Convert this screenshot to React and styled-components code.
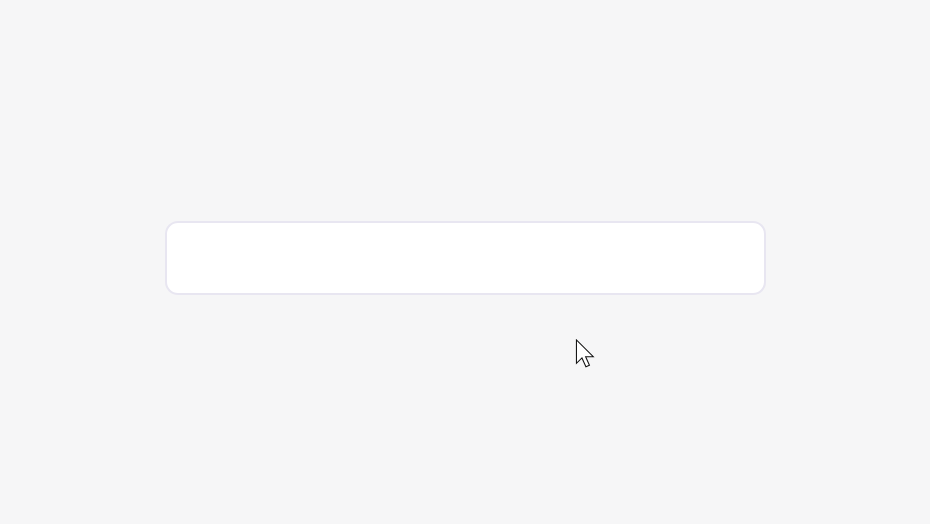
import React from 'react';
import styled, { createGlobalStyle } from 'styled-components';

const GlobalStyle = createGlobalStyle`
  html, body {
    margin: 0;
    padding: 0;
    background: #f6f6f7;
    font-family: Inter, "Liberation Sans", sans-serif;
  }
`;

const PageStyled = styled.div`
  position: relative;
  height: 100vh;
  display: flex;
  flex-direction: column;
  align-items: center;
  justify-content: center;
  padding-bottom: 8px;
  box-sizing: border-box;
`;

const InputBox = styled.div`
  width: 601px;
  height: 74px;
  box-sizing: border-box;
  background: #ffffff;
  border: 2px solid #e8e6f1;
  border-radius: 13px;
`;

const Cursor = styled.svg`
  position: absolute;
  left: 575px;
  top: 339px;
  pointer-events: none;
`;

export default function App() {
  return (
    <>
      <GlobalStyle />
      <PageStyled>
        <InputBox />
        <Cursor width="20" height="29" viewBox="0 0 13.5 20.5">
          <path
            d="M0.7 0.7 L0.7 17.2 L4.6 13.4 L7.4 19.6 L9.9 18.5 L7.2 12.5 L12.6 12.5 Z"
            fill="#ffffff"
            stroke="#111111"
            strokeWidth="0.75"
            strokeLinejoin="miter"
          />
        </Cursor>
      </PageStyled>
    </>
  );
}
